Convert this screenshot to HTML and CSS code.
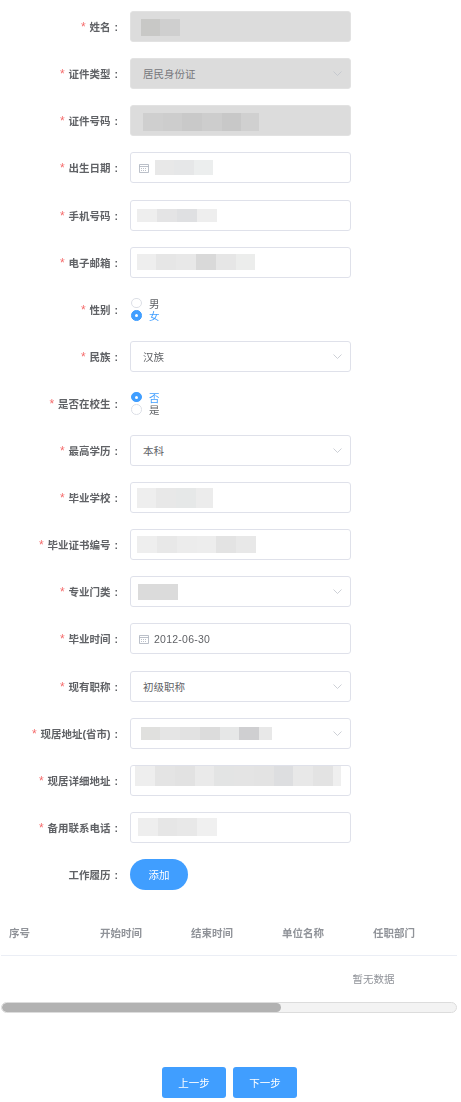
FILE: index.html
```html
<!DOCTYPE html>
<html lang="zh-CN">
<head>
    <meta charset="UTF-8">
    <meta name="viewport" content="width=device-width, initial-scale=1.0">
    <title>基本信息</title>
    <link rel="stylesheet" href="styles.css">
</head>
<body>
    <form class="form">
        <div class="row">
            <label class="label required">姓名 :</label>
            <div class="field disabled"><span class="mosaic m-name"></span></div>
        </div>
        <div class="row">
            <label class="label required">证件类型 :</label>
            <div class="field disabled select">
                <span class="value">居民身份证</span>
                <svg class="arrow" viewBox="0 0 9 5"><path d="M.5.5l4 4 4-4"/></svg>
            </div>
        </div>
        <div class="row">
            <label class="label required">证件号码 :</label>
            <div class="field disabled"><span class="mosaic m-idcard"></span></div>
        </div>
        <div class="row">
            <label class="label required">出生日期 :</label>
            <div class="field">
                <svg class="calendar" viewBox="0 0 10 10"><path d="M.5 1.5h9v8h-9zM.5 3.5h9"/><path class="dots" d="M2 5.5h6M2 7.5h6"/></svg>
                <span class="mosaic m-birth"></span>
            </div>
        </div>
        <div class="row">
            <label class="label required">手机号码 :</label>
            <div class="field"><span class="mosaic m-phone"></span></div>
        </div>
        <div class="row">
            <label class="label required">电子邮箱 :</label>
            <div class="field"><span class="mosaic m-email"></span></div>
        </div>
        <div class="row">
            <label class="label required">性别 :</label>
            <div class="radios">
                <div class="radio"><i></i>男</div>
                <div class="radio checked"><i></i>女</div>
            </div>
        </div>
        <div class="row">
            <label class="label required">民族 :</label>
            <div class="field select">
                <span class="value">汉族</span>
                <svg class="arrow" viewBox="0 0 9 5"><path d="M.5.5l4 4 4-4"/></svg>
            </div>
        </div>
        <div class="row">
            <label class="label required">是否在校生 :</label>
            <div class="radios">
                <div class="radio checked"><i></i>否</div>
                <div class="radio"><i></i>是</div>
            </div>
        </div>
        <div class="row">
            <label class="label required">最高学历 :</label>
            <div class="field select">
                <span class="value">本科</span>
                <svg class="arrow" viewBox="0 0 9 5"><path d="M.5.5l4 4 4-4"/></svg>
            </div>
        </div>
        <div class="row">
            <label class="label required">毕业学校 :</label>
            <div class="field"><span class="mosaic m-school"></span></div>
        </div>
        <div class="row">
            <label class="label required">毕业证书编号 :</label>
            <div class="field"><span class="mosaic m-cert"></span></div>
        </div>
        <div class="row">
            <label class="label required">专业门类 :</label>
            <div class="field select">
                <span class="mosaic m-major"></span>
                <svg class="arrow" viewBox="0 0 9 5"><path d="M.5.5l4 4 4-4"/></svg>
            </div>
        </div>
        <div class="row">
            <label class="label required">毕业时间 :</label>
            <div class="field">
                <svg class="calendar" viewBox="0 0 10 10"><path d="M.5 1.5h9v8h-9zM.5 3.5h9"/><path class="dots" d="M2 5.5h6M2 7.5h6"/></svg>
                <span class="date">2012-06-30</span>
            </div>
        </div>
        <div class="row">
            <label class="label required">现有职称 :</label>
            <div class="field select">
                <span class="value">初级职称</span>
                <svg class="arrow" viewBox="0 0 9 5"><path d="M.5.5l4 4 4-4"/></svg>
            </div>
        </div>
        <div class="row">
            <label class="label required">现居地址(省市) :</label>
            <div class="field select">
                <span class="mosaic m-address"></span>
                <svg class="arrow" viewBox="0 0 9 5"><path d="M.5.5l4 4 4-4"/></svg>
            </div>
        </div>
        <div class="row">
            <label class="label required">现居详细地址 :</label>
            <div class="field"><span class="mosaic m-detail"></span></div>
        </div>
        <div class="row">
            <label class="label required">备用联系电话 :</label>
            <div class="field"><span class="mosaic m-backup"></span></div>
        </div>
        <div class="row">
            <label class="label">工作履历 :</label>
            <button type="button" class="btn round">添加</button>
        </div>
    </form>

    <div class="table-wrap">
        <div class="table">
            <div class="table-head">
                <div class="cell">序号</div>
                <div class="cell">开始时间</div>
                <div class="cell">结束时间</div>
                <div class="cell">单位名称</div>
                <div class="cell">任职部门</div>
            </div>
            <div class="table-empty">暂无数据</div>
        </div>
        <div class="scrollbar"><div class="thumb"></div></div>
    </div>

    <div class="actions">
        <button type="button" class="btn step">上一步</button>
        <button type="button" class="btn step">下一步</button>
    </div>
</body>
</html>
```

FILE: styles.css
```css
* {
    box-sizing: border-box;
}
html, body {
    overflow: hidden;
}
body {
    margin: 0;
    height: 1102px;
    background: #fff;
    color: #606266;
    font-family: "Liberation Sans", "Noto Sans CJK SC", sans-serif;
    font-size: 10.5px;
    filter: blur(0.3px);
}
.form {
    padding-top: 11.2px;
}
.row {
    display: flex;
    align-items: center;
    height: 31px;
    margin-bottom: 16.1px;
}
.label {
    width: 118px;
    margin-right: 12px;
    text-align: right;
    font-weight: 700;
    white-space: nowrap;
    word-spacing: 1px;
}
.required::before {
    content: "*";
    margin-right: 4px;
    color: #f56c6c;
    font-size: 12px;
    font-weight: 400;
}
.field {
    display: flex;
    align-items: center;
    position: relative;
    width: 221px;
    height: 31px;
    border: 1px solid #dfe1ea;
    border-radius: 3px;
    background: #fff;
}
.field.disabled {
    background: #dcdcdc;
    border-color: #e2e2e2;
    color: #77787c;
}
.value {
    margin-left: 12px;
}
.arrow {
    flex: none;
    width: 9px;
    height: 5px;
    margin-left: auto;
    margin-right: 8px;
    fill: none;
    stroke: #c0c4cc;
    stroke-width: .8;
}
.calendar {
    flex: none;
    width: 10px;
    height: 10px;
    margin-left: 8px;
    fill: none;
    stroke: #a9b0bb;
    stroke-width: .8;
}
.calendar .dots {
    stroke-dasharray: 1 1;
}
.date {
    margin-left: 5px;
    letter-spacing: .25px;
}

/* blurred personal data, cells about 20px wide */
.mosaic {
    display: block;
    flex: none;
}
.m-name {
    width: 39px;
    height: 17px;
    margin: 2px 0 0 10px;
    background: linear-gradient(90deg, #c8c8c6 19px, #cfcfcf 19px);
}
.m-idcard {
    width: 116px;
    height: 18px;
    margin: 2px 0 0 12px;
    background: linear-gradient(90deg, #cfcfcf 20px, #cdcdcd 20px 39px, #c9c9c9 39px 59px, #cdcdcd 59px 79px, #c8c8c8 79px 98px, #d0d0d0 98px);
}
.m-birth {
    width: 58px;
    height: 15px;
    margin: -1px 0 0 6px;
    background: linear-gradient(90deg, #e8e8e8 19px, #e6e7e8 19px 39px, #eceeee 39px);
}
.m-phone {
    width: 80px;
    height: 13px;
    margin: 0 0 0 6px;
    background: linear-gradient(90deg, #eeeeee 20px, #e4e4e5 20px 40px, #dfe0e2 40px 60px, #eeeeee 60px);
}
.m-email {
    width: 118px;
    height: 16px;
    margin: 0 0 0 6px;
    background: linear-gradient(90deg, #eeeeee 19px, #e6e6e6 19px 39px, #e8e8e8 39px 59px, #d9d9d9 59px 79px, #e6e6e6 79px 99px, #ecedec 99px);
}
.m-school {
    width: 76px;
    height: 20px;
    margin: 0 0 0 6px;
    background: linear-gradient(90deg, #eeeeee 19px, #e8e8e8 19px 39px, #e6e8e8 39px 59px, #ececec 59px);
}
.m-cert {
    width: 119px;
    height: 17px;
    margin: 0 0 0 6px;
    background: linear-gradient(90deg, #eeeeee 20px, #e8e8e8 20px 40px, #ececec 40px 60px, #ededed 60px 79px, #e3e3e3 79px 99px, #e8e8e8 99px);
}
.m-major {
    width: 40px;
    height: 16px;
    margin: 0 0 0 7px;
    background: #dbdbdb;
}
.m-address {
    width: 131px;
    height: 13px;
    margin: 0 0 0 10px;
    background: linear-gradient(90deg, #e0e0de 19px, #e5e5e5 19px 39px, #e2e2e2 39px 59px, #dcdcdc 59px 79px, #e6e7e7 79px 98px, #cfcfd1 98px 118px, #e8e8e8 118px);
}
.m-detail {
    width: 206px;
    height: 20px;
    margin: -8px 0 0 4px;
    background: linear-gradient(90deg, #eeeeee 20px, #e4e4e4 20px 40px, #e2e2e2 40px 60px, #eaeaea 60px 79px, #e3e4e4 79px 99px, #e4e4e4 99px 119px, #e3e3e3 119px 139px, #dddee0 139px 158px, #e8e8e8 158px 178px, #e3e3e3 178px 198px, #efefef 198px);
}
.m-backup {
    width: 79px;
    height: 18px;
    margin: 0 0 0 7px;
    background: linear-gradient(90deg, #eeeeee 20px, #e6e6e6 20px 39px, #e8e8e8 39px 59px, #f0f0f0 59px);
}

.radios {
    display: flex;
    flex-direction: column;
    padding-left: 1px;
}
.radio {
    display: flex;
    align-items: center;
    height: 12.5px;
}
.radio i {
    position: relative;
    width: 10.5px;
    height: 10.5px;
    margin-right: 7.5px;
    border: 1px solid #dcdfe6;
    border-radius: 50%;
    background: #fff;
}
.radio.checked {
    color: #409eff;
}
.radio.checked i {
    border-color: #409eff;
    background: #409eff;
}
.radio.checked i::after {
    content: "";
    position: absolute;
    left: 2.75px;
    top: 2.75px;
    width: 3px;
    height: 3px;
    border-radius: 50%;
    background: #fff;
}

.btn {
    height: 31px;
    padding: 0;
    border: 0;
    background: #409eff;
    color: #fff;
    font: inherit;
}
.btn.round {
    width: 58px;
    border-radius: 16px;
}
.btn.step {
    width: 64px;
    border-radius: 3px;
}

.table-wrap {
    width: 456px;
    margin: 20px 0 0 1px;
    overflow: hidden;
}
.table {
    width: 745px;
}
.table-head {
    display: flex;
    height: 46px;
    border-bottom: 1px solid #ebeef5;
    align-items: center;
    color: #909399;
    font-weight: 700;
}
.cell {
    flex: none;
    width: 91px;
    padding-left: 8px;
}
.table-empty {
    height: 46px;
    line-height: 46px;
    text-align: center;
    color: #909399;
}
.scrollbar {
    height: 11.5px;
    border: 1px solid #dcdcdc;
    border-radius: 6px;
    background: #f3f3f3;
    overflow: hidden;
}
.thumb {
    width: 279px;
    height: 100%;
    border-radius: 6px;
    background: #b2b2b2;
}
.actions {
    display: flex;
    justify-content: center;
    gap: 7px;
    margin-top: 53.5px;
    padding-right: 2px;
}
```
